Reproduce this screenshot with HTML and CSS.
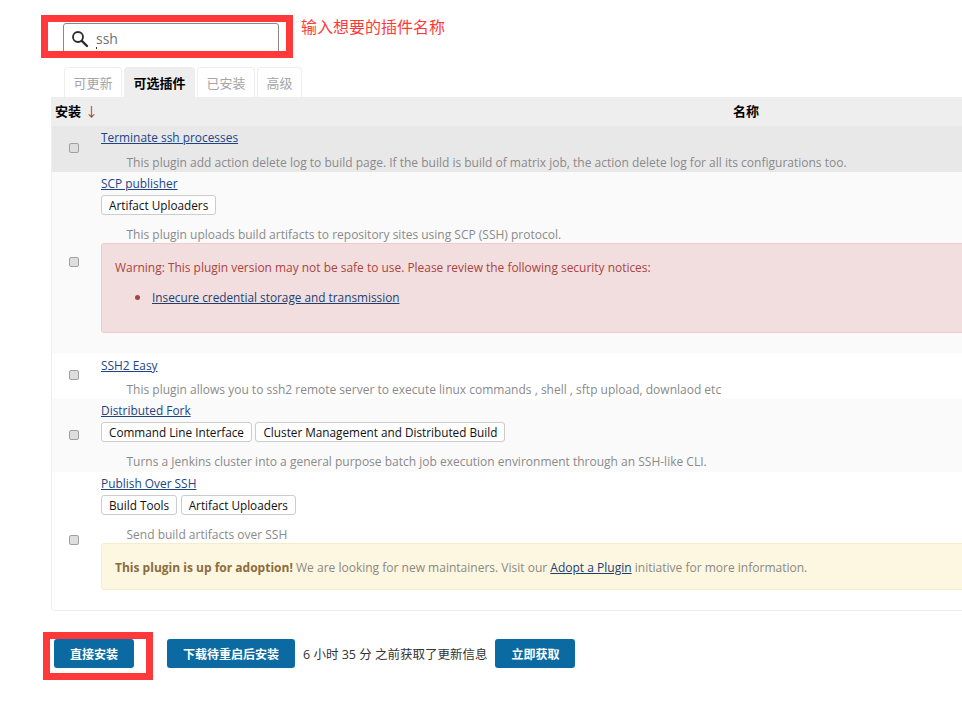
FILE: index.html
```html
<!DOCTYPE html>
<html lang="zh-CN">
<head>
<meta charset="utf-8">
<title>插件管理</title>
<link rel="stylesheet" href="styles.css">
</head>
<body>
<main class="page">
  <div class="search">
    <svg class="search-icon" width="18" height="18" viewBox="0 0 18 18" aria-hidden="true"><circle cx="7" cy="7" r="5" fill="none" stroke="#2b2b2b" stroke-width="1.8"/><path d="M10.8 10.8 16 16" stroke="#2b2b2b" stroke-width="2.4" stroke-linecap="round"/></svg>
    <input class="search-input" type="text" value="ssh">
  </div>
  <ul class="tabs">
    <li class="tab">可更新</li>
    <li class="tab tab-active">可选插件</li>
    <li class="tab">已安装</li>
    <li class="tab">高级</li>
  </ul>
  <div class="table-wrap">
    <table class="plugins">
      <thead>
        <tr><th class="col-install">安装 <span class="sort">↓</span></th><th class="col-name">名称</th></tr>
      </thead>
      <tbody>
        <tr class="row-hover">
          <td class="cell-check"><input class="check" type="checkbox"></td>
          <td><a class="plugin-link" href="#">Terminate ssh processes</a>
            <p class="desc">This plugin add action delete log to build page. If the build is build of matrix job, the action delete log for all its configurations too.</p></td>
        </tr>
        <tr class="row-alt">
          <td class="cell-check"><input class="check" type="checkbox"></td>
          <td><a class="plugin-link" href="#">SCP publisher</a>
            <div class="labels"><span class="chip">Artifact Uploaders</span></div>
            <p class="desc">This plugin uploads build artifacts to repository sites using SCP (SSH) protocol.</p>
            <div class="alert alert-danger">
              <p class="alert-text">Warning: This plugin version may not be safe to use. Please review the following security notices:</p>
              <ul class="alert-list"><li class="alert-item"><a href="#">Insecure credential storage and transmission</a></li></ul>
            </div></td>
        </tr>
        <tr class="row-low">
          <td class="cell-check"><input class="check" type="checkbox"></td>
          <td><a class="plugin-link" href="#">SSH2 Easy</a>
            <p class="desc">This plugin allows you to ssh2 remote server to execute linux commands , shell , sftp upload, downlaod etc</p></td>
        </tr>
        <tr class="row-alt">
          <td class="cell-check"><input class="check" type="checkbox"></td>
          <td><a class="plugin-link" href="#">Distributed Fork</a>
            <div class="labels"><span class="chip">Command Line Interface</span><span class="chip">Cluster Management and Distributed Build</span></div>
            <p class="desc">Turns a Jenkins cluster into a general purpose batch job execution environment through an SSH-like CLI.</p></td>
        </tr>
        <tr>
          <td class="cell-check"><input class="check" type="checkbox"></td>
          <td><a class="plugin-link" href="#">Publish Over SSH</a>
            <div class="labels"><span class="chip">Build Tools</span><span class="chip">Artifact Uploaders</span></div>
            <p class="desc">Send build artifacts over SSH</p>
            <div class="alert alert-warning"><strong>This plugin is up for adoption!</strong> We are looking for new maintainers. Visit our <a href="#">Adopt a Plugin</a> initiative for more information.</div></td>
        </tr>
      </tbody>
    </table>
  </div>
  <div class="actions">
    <button class="btn btn-first" type="button">直接安装</button>
    <button class="btn" type="button">下载待重启后安装</button>
    <span class="updated">6 小时 35 分 之前获取了更新信息</span>
    <button class="btn btn-last" type="button">立即获取</button>
  </div>
</main>
<div class="mark mark-search"></div>
<div class="mark mark-install"></div>
<div class="note">输入想要的插件名称</div>
</body>
</html>
```

FILE: styles.css
```css
html, body {
  margin: 0;
  height: 718px;
  overflow: hidden;
  background: #fff;
}
body {
  position: relative;
  font-family: "Open Sans", "Noto Sans CJK SC", sans-serif;
  font-size: 12px;
  color: #333;
}
.page {
  padding-top: 23px;
}
.search {
  position: relative;
  display: flex;
  align-items: center;
  box-sizing: border-box;
  width: 216px;
  height: 31px;
  margin-left: 63px;
  padding-left: 7px;
  border: 1px solid #8a8a8a;
  border-radius: 3px;
}
.search::after {
  content: "";
  position: absolute;
  left: 32px;
  top: 23px;
  width: 1px;
  height: 2px;
  background: #333;
}
.search-icon {
  flex: none;
}
.search-input {
  flex: 1;
  min-width: 0;
  margin-left: 7px;
  padding: 0;
  border: 0;
  outline: 0;
  font: 14px "Open Sans", sans-serif;
  color: #707070;
  background: transparent;
}
.tabs {
  display: flex;
  gap: 2px;
  height: 30px;
  margin: 13px 0 0 64px;
  padding: 0;
  list-style: none;
}
.tab {
  padding: 0 8.5px;
  border: 1px solid #eee;
  border-bottom: 0;
  border-radius: 4px 4px 0 0;
  font-size: 13px;
  line-height: 29px;
  color: #a5a5a5;
  font-family: "Noto Sans CJK SC", sans-serif;
}
.tab-active {
  background: #eee;
  color: #000;
  font-weight: 700;
}
.table-wrap {
  box-sizing: border-box;
  width: 1341px;
  margin-left: 51px;
  border: 1px solid #eee;
  border-top: 0;
  border-radius: 0 0 4px 4px;
}
.plugins {
  width: 100%;
  border-collapse: collapse;
  table-layout: fixed;
}
.plugins th {
  height: 27px;
  padding: 0 0 2px;
  background: #eee;
  color: #000;
  font-size: 13px;
  font-weight: 700;
  font-family: "Noto Sans CJK SC", sans-serif;
}
.plugins .col-install {
  width: 46px;
  padding-left: 3px;
  text-align: left;
  white-space: nowrap;
}
.sort {
  margin-left: 1px;
  color: #a33;
  font-weight: 400;
}
.plugins td {
  padding: 0;
  vertical-align: top;
}
.plugins .cell-check {
  vertical-align: middle;
  padding-left: 17px;
}
.check {
  appearance: none;
  display: block;
  box-sizing: border-box;
  width: 10px;
  height: 10px;
  margin: -2px 0 0;
  border: 1px solid #a0a0a0;
  border-radius: 2px;
  background: #dedede;
}
.row-hover {
  background: #e8e8e8;
}
.row-alt {
  background: #fafafa;
}
.plugin-link {
  display: block;
  width: max-content;
  padding-top: 1px;
  font-size: 11.9px;
  line-height: 20px;
  color: #1c4587;
  text-decoration: underline;
}
.labels {
  display: flex;
  gap: 3.5px;
  margin-top: 2px;
  margin-bottom: 5px;
}
.chip {
  display: block;
  height: 20px;
  box-sizing: border-box;
  padding: 0 7px;
  border: 1px solid #ccc;
  border-radius: 3px;
  background: #fff;
  font-size: 11.75px;
  line-height: 19px;
  color: #111;
  font-weight: 500;
}
.desc {
  margin: 0 0 -1px;
  padding: 6px 0 0 25.5px;
  line-height: 20px;
  color: #8a8a8a;
}
.labels + .desc {
  margin-bottom: 0;
  padding-top: 5px;
}
.row-low .plugin-link {
  padding-top: 2px;
}
.row-low .desc {
  padding-top: 5px;
}
.alert {
  box-sizing: border-box;
  margin: -2px 0 20px;
  padding-left: 13px;
  border: 1px solid;
  border-radius: 3px;
}
.alert a {
  color: #1c3f70;
}
.alert-danger {
  height: 90px;
  padding-top: 14px;
  background: #f2dede;
  border-color: #eccccf;
  color: #a94442;
}
.alert-text {
  margin: 0;
  font-size: 11.95px;
  line-height: 20px;
}
.alert-list {
  margin: 9px 0 0;
  padding: 0 0 0 20px;
  list-style: none;
  font-size: 11.8px;
  line-height: 20px;
}
.alert-item {
  display: flex;
  align-items: center;
  gap: 12px;
}
.alert-item::before {
  content: "";
  width: 5px;
  height: 5px;
  border-radius: 50%;
  background: #a94442;
}
.alert-warning {
  height: 47px;
  font-size: 12.03px;
  line-height: 47px;
  background: #fdf6e1;
  border-color: #f6ecc8;
  color: #8a8a80;
}
.alert-warning strong {
  color: #8a6d3b;
}
.actions {
  display: flex;
  align-items: center;
  height: 29px;
  margin: 28px 0 0 54px;
  gap: 8px;
}
.btn {
  height: 29px;
  padding: 0 16px;
  border: 0;
  border-radius: 3px;
  background: #0b6aa2;
  color: #fff;
  font: 700 12px "Noto Sans CJK SC", sans-serif;
}
.btn-first {
  margin-right: 25px;
}
.updated {
  color: #333;
  font-size: 12.5px;
  white-space: nowrap;
}
.mark {
  position: absolute;
  box-sizing: border-box;
  border: 7px solid #ff3939;
}
.mark-search {
  left: 41px;
  top: 15px;
  width: 252px;
  height: 43px;
}
.mark-install {
  left: 43px;
  top: 632px;
  width: 110px;
  height: 48px;
}
.note {
  position: absolute;
  left: 301px;
  top: 14px;
  font-size: 16px;
  line-height: 24px;
  color: #ff3939;
  font-family: "Noto Sans CJK SC", sans-serif;
}
```
